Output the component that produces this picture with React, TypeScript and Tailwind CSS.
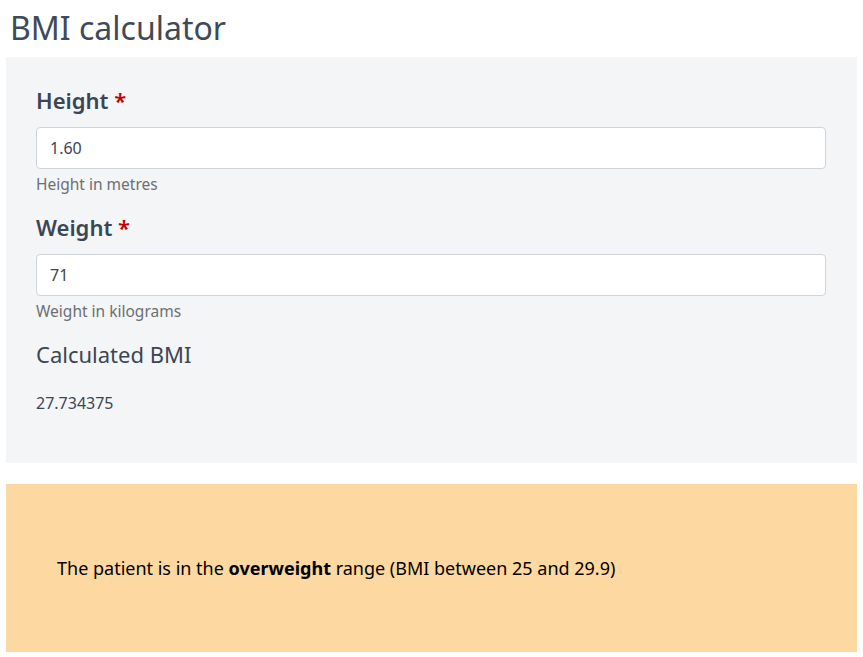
import React from 'react';

const font = { fontFamily: '"Noto Sans", "Open Sans", sans-serif' };

const Field = ({ label, value, help }: { label: string; value: string; help: string }) => (
  <div className="mb-[17px]">
    <label className="block text-[22px] font-semibold text-[#3b4654] leading-[30px] mb-[12px]">
      {label} <span className="text-[#c00000]">*</span>
    </label>
    <input
      readOnly
      value={value}
      className="block w-full h-[42px] rounded-[4px] border border-[#ced4da] bg-white px-[13px] text-[16px] text-[#3b4654] outline-none"
    />
    <div className="mt-[4px] text-[15.5px] text-[#6c6f73] leading-[22px]">{help}</div>
  </div>
);

export default function App() {
  return (
    <div className="w-[863px] h-[657px] bg-white px-[6px]" style={font}>
      <h1 className="pl-[4px] pt-[8px] text-[32px] leading-[40px] text-[#3e4a59] h-[57px]">BMI calculator</h1>
      <div className="bg-[#f4f5f7] pl-[30px] pr-[31px] pt-[28px] pb-[30px] h-[406px]">
        <Field label="Height" value="1.60" help="Height in metres" />
        <Field label="Weight" value="71" help="Weight in kilograms" />
        <div className="text-[22px] leading-[30px] text-[#3b4654] mt-[1px]">Calculated BMI</div>
        <div className="mt-[22px] text-[16px] text-[#3b4654]">27.734375</div>
      </div>
      <div className="mt-[21px] h-[168px] bg-[#fdd8a1] flex items-center pl-[51px] text-[18px] text-black">
        <p>
          The patient is in the <strong className="font-bold">overweight</strong> range (BMI between 25 and 29.9)
        </p>
      </div>
    </div>
  );
}
